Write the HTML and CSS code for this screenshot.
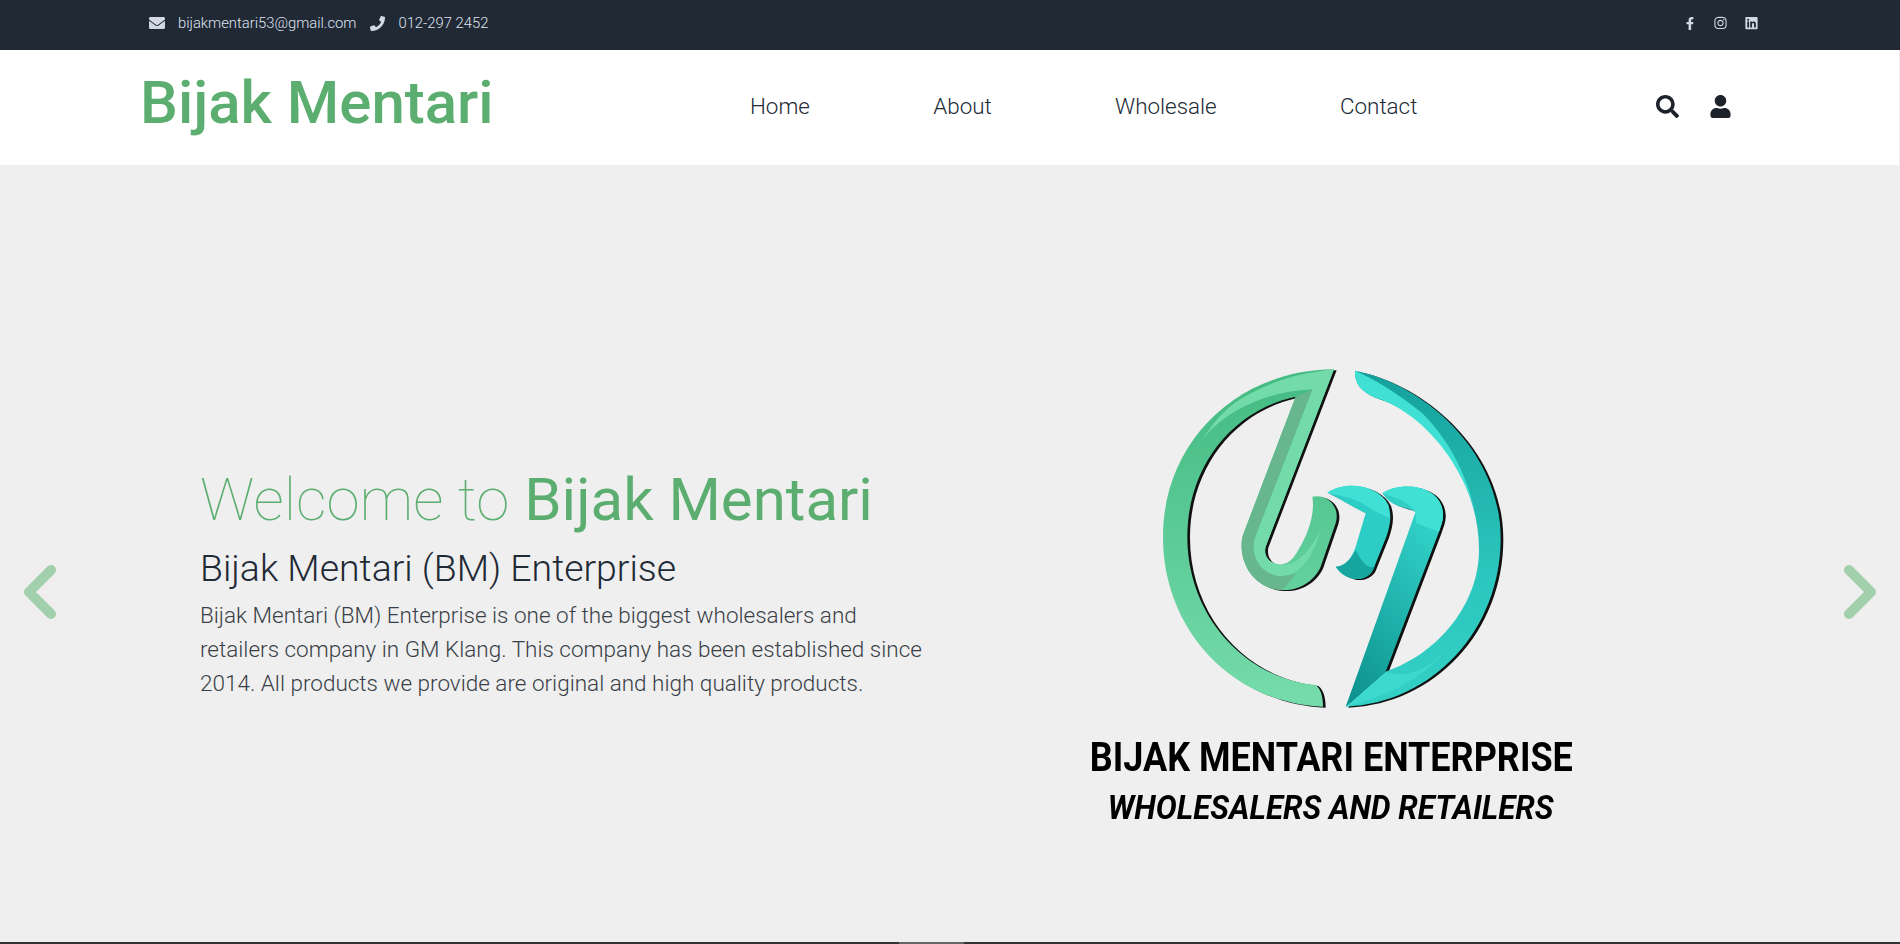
FILE: index.html
```html
<!DOCTYPE html>
<html lang="en">
<head>
    <meta charset="UTF-8">
    <title>Bijak Mentari</title>
    <link rel="stylesheet" href="styles.css">
</head>
<body>
    <div class="topbar">
        <div class="contact-info">
            <svg class="ico-mail" viewBox="0 0 512 512"><path d="M502.3 190.8c3.9-3.1 9.7-.2 9.7 4.7V400c0 26.5-21.5 48-48 48H48c-26.5 0-48-21.5-48-48V195.6c0-5 5.7-7.8 9.7-4.7 22.4 17.4 52.1 39.5 154.1 113.6 21.1 15.4 56.7 47.8 92.2 47.6 35.7.3 72-32.8 92.3-47.6 102-74.1 131.6-96.3 154-113.7zM256 320c23.2.4 56.6-29.2 73.4-41.4 132.7-96.3 142.8-104.7 173.4-128.7 5.8-4.5 9.2-11.5 9.2-18.9v-19c0-26.5-21.5-48-48-48H48C21.5 64 0 85.5 0 112v19c0 7.4 3.4 14.3 9.2 18.9 30.6 23.9 40.7 32.4 173.4 128.7 16.8 12.2 50.2 41.8 73.4 41.4z"/></svg>
            <span class="mail-text">bijakmentari53@gmail.com</span>
            <svg class="ico-phone" viewBox="0 0 512 512"><path d="M493.4 24.6l-104-24c-11.3-2.6-22.9 3.3-27.5 13.9l-48 112c-4.2 9.8-1.4 21.3 6.9 28l60.6 49.6c-36 76.7-98.9 140.5-177.2 177.2l-49.6-60.6c-6.8-8.3-18.2-11.1-28-6.9l-112 48C3.9 366.5-2 378.1.6 389.4l24 104C27.1 504.2 36.7 512 48 512c256.1 0 464-207.5 464-464 0-11.2-7.7-20.9-18.6-23.4z"/></svg>
            <span>012-297 2452</span>
        </div>
        <div class="social">
            <svg class="ico-fb" viewBox="0 0 320 512"><path d="M279.14 288l14.22-92.66h-88.91v-60.13c0-25.35 12.42-50.06 52.24-50.06h40.42V6.26S260.43 0 225.36 0c-73.22 0-121.08 44.38-121.08 124.72v70.62H22.89V288h81.39v224h100.17V288z"/></svg>
            <svg class="ico-soc" viewBox="0 0 448 512"><path d="M224.1 141c-63.6 0-114.9 51.3-114.9 114.9s51.3 114.9 114.9 114.9S339 319.5 339 255.9 287.7 141 224.1 141zm0 189.6c-41.1 0-74.7-33.5-74.7-74.7s33.5-74.7 74.7-74.7 74.7 33.5 74.7 74.7-33.6 74.7-74.7 74.7zm146.4-194.3c0 14.9-12 26.8-26.8 26.8-14.9 0-26.8-12-26.8-26.8s12-26.8 26.8-26.8 26.8 12 26.8 26.8zm76.1 27.2c-1.7-35.9-9.9-67.7-36.2-93.9-26.2-26.2-58-34.4-93.9-36.2-37-2.1-147.9-2.1-184.9 0-35.8 1.7-67.6 9.9-93.9 36.1s-34.4 58-36.2 93.9c-2.1 37-2.1 147.9 0 184.9 1.7 35.9 9.9 67.7 36.2 93.9s58 34.4 93.9 36.2c37 2.1 147.9 2.1 184.9 0 35.9-1.7 67.7-9.9 93.9-36.2 26.2-26.2 34.4-58 36.2-93.9 2.1-37 2.1-147.8 0-184.8zM398.8 388c-7.8 19.6-22.9 34.7-42.6 42.6-29.5 11.7-99.5 9-132.1 9s-102.7 2.6-132.1-9c-19.6-7.8-34.7-22.9-42.6-42.6-11.7-29.5-9-99.5-9-132.1s-2.6-102.7 9-132.1c7.8-19.6 22.9-34.7 42.6-42.6 29.5-11.7 99.5-9 132.1-9s102.7-2.6 132.1 9c19.6 7.8 34.7 22.9 42.6 42.6 11.7 29.5 9 99.5 9 132.1s2.7 102.7-9 132.1z"/></svg>
            <svg class="ico-soc" viewBox="0 0 448 512"><path d="M416 32H31.9C14.3 32 0 46.5 0 64.3v383.4C0 465.5 14.3 480 31.9 480H416c17.6 0 32-14.5 32-32.3V64.3c0-17.8-14.4-32.3-32-32.3zM135.4 416H69V202.2h66.5V416zm-33.2-243c-21.3 0-38.5-17.3-38.5-38.5S80.9 96 102.2 96c21.2 0 38.5 17.3 38.5 38.5 0 21.3-17.2 38.5-38.5 38.5zm282.1 243h-66.4V312c0-24.8-.5-56.7-34.5-56.7-34.6 0-39.9 27-39.9 54.9V416h-66.4V202.2h63.7v29.2h.9c8.9-16.8 30.6-34.5 62.9-34.5 67.2 0 79.7 44.3 79.7 101.9V416z"/></svg>
        </div>
    </div>

    <div class="header">
        <a class="brand">Bijak Mentari</a>
        <ul class="nav">
            <li>Home</li>
            <li>About</li>
            <li>Wholesale</li>
            <li>Contact</li>
        </ul>
        <div class="header-icons">
            <svg class="ico-head" viewBox="0 0 512 512"><path d="M505 442.7L405.3 343c-4.5-4.5-10.6-7-17-7H372c27.6-35.3 44-79.7 44-128C416 93.1 322.9 0 208 0S0 93.1 0 208s93.1 208 208 208c48.3 0 92.7-16.4 128-44v16.3c0 6.4 2.5 12.5 7 17l99.7 99.7c9.4 9.4 24.6 9.4 33.9 0l28.3-28.3c9.4-9.4 9.4-24.6.1-34zM208 336c-70.7 0-128-57.2-128-128 0-70.7 57.2-128 128-128 70.7 0 128 57.2 128 128 0 70.7-57.2 128-128 128z"/></svg>
            <svg class="ico-head" viewBox="0 0 448 512"><path d="M224 256c70.7 0 128-57.3 128-128S294.7 0 224 0 96 57.3 96 128s57.3 128 128 128zm89.6 32h-16.7c-22.2 10.2-46.9 16-72.9 16s-50.6-5.8-72.9-16h-16.7C60.2 288 0 348.2 0 422.4V464c0 26.5 21.5 48 48 48h352c26.5 0 48-21.5 48-48v-41.6c0-74.2-60.2-134.4-134.4-134.4z"/></svg>
        </div>
    </div>

    <div class="hero">
        <svg class="arrow arrow-prev" viewBox="0 0 34 54"><path d="M28 5 L6 27 L28 49"/></svg>
        <div class="hero-text">
            <h1><span class="thin">Welcome to</span> Bijak Mentari</h1>
            <h2>Bijak Mentari (BM) Enterprise</h2>
            <p>Bijak Mentari (BM) Enterprise is one of the biggest wholesalers and retailers company in GM Klang. This company has been established since 2014. All products we provide are original and high quality products.</p>
        </div>
        <div class="hero-logo">
            <svg class="logo-mark" viewBox="6 0 1140 1140">
                <defs>
                    <linearGradient id="gLeft" x1="0" y1="0" x2="0" y2="1">
                        <stop offset="0" stop-color="#43ba82"/>
                        <stop offset="0.5" stop-color="#5ccb97"/>
                        <stop offset="1" stop-color="#76dcab"/>
                    </linearGradient>
                    <linearGradient id="gRight" x1="0" y1="0" x2="0" y2="1">
                        <stop offset="0" stop-color="#15a09c"/>
                        <stop offset="0.6" stop-color="#2bc6bd"/>
                        <stop offset="1" stop-color="#34d0c6"/>
                    </linearGradient>
                    <linearGradient id="gDiag" x1="0.6" y1="0.1" x2="0.2" y2="1">
                        <stop offset="0" stop-color="#30cfc6"/>
                        <stop offset="1" stop-color="#0e9390"/>
                    </linearGradient>
                    <path id="leftHalf" d="M585 58 C290 60 72 280 72 560 C72 840 280 1060 552 1070 C552 1040 545 1015 530 1005 C320 985 145 800 145 560 C145 350 280 180 470 140 L310 560 C295 640 350 720 430 720 C480 722 525 695 545 650 L590 520 C605 470 565 430 520 440 C530 500 500 570 465 620 C430 665 370 640 380 590 Z"/>
                    <path id="rightRing" d="M648 62 C850 100 1085 300 1085 565 C1085 840 880 1060 620 1070 L740 965 C900 910 1020 760 1020 600 C1020 400 890 210 730 150 C680 135 645 110 648 62 Z"/>
                    <path id="diagStem" d="M620 1070 L830 485 C800 470 760 475 730 430 C780 395 905 400 912 490 C914 510 905 530 900 545 L740 965 Z"/>
                    <path id="mArch" d="M565 428 C620 390 720 405 748 465 C760 500 752 530 742 560 L702 660 C680 700 620 695 590 650 C620 650 640 620 650 590 L680 490 C640 470 610 450 565 428 Z"/>
                </defs>
                <!-- black drop edge under every piece -->
                <g class="logo-shadow">
                    <use href="#leftHalf"/>
                    <use href="#rightRing"/>
                    <use href="#diagStem"/>
                    <use href="#mArch"/>
                </g>
                <use href="#leftHalf" fill="url(#gLeft)"/>
                <path fill="#72dba9" d="M585 58 C480 70 400 90 300 150 C260 175 220 220 190 270 C250 190 370 125 520 118 L345 570 C335 640 385 680 430 678 C490 675 525 610 545 540 C510 610 465 650 430 645 C390 640 370 620 380 590 Z"/>
                <path fill="#67b68e" d="M470 140 L520 118 L345 570 C335 640 385 680 430 678 L470 672 C450 700 435 715 430 720 C350 720 295 640 310 560 Z"/>
                <use href="#rightRing" fill="url(#gRight)"/>
                <path fill="#41e0d4" d="M648 62 C700 85 780 130 850 190 C930 270 990 380 1015 520 C990 380 880 210 730 150 C680 135 645 110 648 62 Z"/>
                <path fill="#3dd9cf" d="M620 1070 C740 1040 850 990 930 890 C880 950 810 990 740 965 Z"/>
                <use href="#diagStem" fill="url(#gDiag)"/>
                <path fill="#40e0d5" d="M730 430 C780 395 905 400 912 490 C914 510 905 530 900 545 L832 520 L830 485 C800 450 760 440 730 430 Z"/>
                <use href="#mArch" fill="#2ccdc4"/>
                <path fill="#40e0d5" d="M565 428 C620 390 720 405 748 465 L752 505 L700 480 C650 440 610 440 565 428 Z"/>
                <path fill="#17a5a0" d="M590 650 C620 650 640 620 650 600 C670 640 690 660 708 648 L702 660 C680 700 620 695 590 650 Z"/>
            </svg>
            <div class="logo-title">BIJAK MENTARI ENTERPRISE</div>
            <div class="logo-sub">WHOLESALERS AND RETAILERS</div>
        </div>
        <svg class="arrow arrow-next" viewBox="0 0 34 54"><path d="M6 5 L28 27 L6 49"/></svg>
    </div>

    <div class="footer-edge"><div class="footer-thumb"></div></div>
</body>
</html>
```
FILE: styles.css
```css
*{
    margin:0;
    padding:0;
    box-sizing:border-box;
}
html,body{
    height:100%;
}
body{
    display:flex;
    flex-direction:column;
    font-family:"Roboto","Liberation Sans",sans-serif;
    background-color:#efefef;
    overflow:hidden;
}
ul{
    list-style:none;
}

/* top bar */
.topbar{
    height:50px;
    flex:none;
    background-color:#212935;
    color:#dfe3f0;
    display:flex;
    align-items:center;
    justify-content:space-between;
    padding:0 142px 4px 149px;
    font-size:14.8px;
    font-weight:300;
}
.contact-info,.social{
    display:flex;
    align-items:center;
}
.topbar svg{
    fill:#d3d8e6;
}
.ico-mail{
    width:16px;
    height:16px;
    margin-right:13px;
}
.mail-text{
    margin-right:14px;
}
.ico-phone{
    width:15px;
    height:15px;
    margin-right:13px;
}
.social{
    gap:18px;
}
.ico-fb{
    width:10px;
    height:13px;
    margin-right:1px;
}
.ico-soc{
    width:13px;
    height:14px;
}

/* header */
.header{
    height:115px;
    flex:none;
    background-color:#fff;
    display:flex;
    align-items:center;
    padding:0 167px 0 140px;
    margin-right:1px;
}
.brand{
    font-size:60px;
    font-weight:500;
    color:#5bae6f;
    width:610px;
    flex:none;
    position:relative;
    top:-5px;
}
.nav{
    display:flex;
    gap:123.4px;
    flex:1;
    font-size:22.4px;
    font-weight:300;
    color:#212935;
    margin-top:-4px;
}
.header-icons{
    display:flex;
    align-items:center;
    gap:30px;
    margin-top:-2px;
}
.ico-head{
    width:23px;
    height:23px;
    fill:#1d222b;
}

/* hero */
.hero{
    flex:1;
    position:relative;
    display:flex;
    align-items:flex-start;
    padding-left:200px;
}
.hero-text{
    width:730px;
    flex:none;
    margin-top:299px;
}
h1{
    font-size:60px;
    font-weight:400;
    line-height:72px;
    color:#5bae6f;
}
.thin{
    font-weight:100;
}
h2{
    font-size:37.4px;
    font-weight:300;
    line-height:44px;
    color:#212935;
    margin:10px 0 8px;
}
.hero-text p{
    font-size:22.5px;
    font-weight:300;
    line-height:34px;
    color:#3a3f47;
}
.hero-logo{
    flex:none;
    width:788px;
    margin-left:7px;
    display:flex;
    flex-direction:column;
    align-items:center;
    margin-top:185px;
    color:#000;
}
.logo-mark{
    width:380px;
    height:380px;
    filter:blur(0.5px);
}
.logo-title{
    font-size:40px;
    font-weight:700;
    line-height:44px;
    margin-top:6px;
    transform:scaleX(0.9);
}
.logo-sub{
    font-size:33px;
    font-weight:700;
    font-style:italic;
    line-height:40px;
    margin-top:8px;
    transform:scaleX(0.95);
}
.logo-shadow{
    fill:#111;
    transform:translate(8px,3px);
}
.arrow{
    position:absolute;
    top:400px;
    width:34px;
    height:54px;
    fill:none;
    stroke:#a3d0ac;
    stroke-width:10;
    stroke-linecap:round;
    stroke-linejoin:round;
}
.arrow-prev{
    left:23px;
}
.arrow-next{
    right:23px;
}

/* bottom edge */
.footer-edge{
    height:2px;
    flex:none;
    background-color:#333;
    padding-left:899px;
}
.footer-thumb{
    width:65px;
    height:2px;
    background-color:#666;
}
```
